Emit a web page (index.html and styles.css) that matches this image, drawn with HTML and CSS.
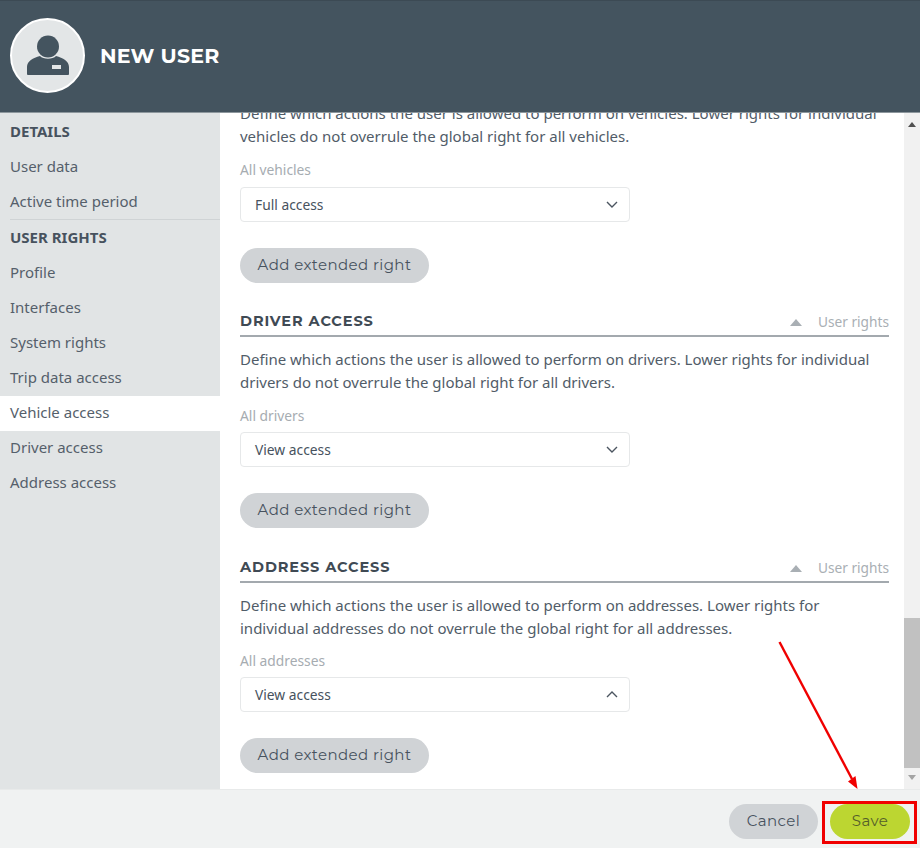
FILE: index.html
```html
<!DOCTYPE html>
<html lang="en">
<head>
<meta charset="utf-8">
<title>New user</title>
<link rel="stylesheet" href="styles.css">
</head>
<body>
<div class="app">
  <header class="header">
    <div class="avatar">
      <svg viewBox="0 0 71 71" width="71" height="71" aria-hidden="true">
        <circle cx="36" cy="26.500" r="11" fill="#44545f"/>
        <path d="M15 54V47C15 41 21 38 28 36C31 39.500 41 39.500 44 36C51 38 57 41 57 47V54C57 55 56 55 55 55H17C16 55 15 55 15 54Z" fill="#44545f"/>
        <rect x="40" y="45" width="9" height="4" fill="#e3e6e7"/>
      </svg>
    </div>
    <h1 class="title">NEW USER</h1>
  </header>
  <div class="middle">
    <nav class="sidebar">
      <div class="nav-head">DETAILS</div>
      <a class="nav-item">User data</a>
      <a class="nav-item">Active time period</a>
      <div class="nav-divider"></div>
      <div class="nav-head">USER RIGHTS</div>
      <a class="nav-item">Profile</a>
      <a class="nav-item">Interfaces</a>
      <a class="nav-item">System rights</a>
      <a class="nav-item">Trip data access</a>
      <a class="nav-item active">Vehicle access</a>
      <a class="nav-item">Driver access</a>
      <a class="nav-item">Address access</a>
    </nav>
    <main class="content">
      <div class="sections">
        <section class="section sec-vehicle">
          <p class="desc">Define which actions the user is allowed to perform on vehicles. Lower rights for individual vehicles do not overrule the global right for all vehicles.</p>
          <div class="field-label">All vehicles</div>
          <div class="select"><span>Full access</span>
            <svg class="chev" viewBox="0 0 12 7" width="12" height="7"><path d="M1 1L6 6L11 1" fill="none" stroke="#4b5560" stroke-width="1.400"/></svg>
          </div>
          <button class="btn btn-grey wide">Add extended right</button>
        </section>
        <section class="section sec-driver">
          <div class="section-head">
            <h2>DRIVER ACCESS</h2>
            <span class="crumb"><i class="tri"></i>User rights</span>
          </div>
          <p class="desc">Define which actions the user is allowed to perform on drivers. Lower rights for individual drivers do not overrule the global right for all drivers.</p>
          <div class="field-label">All drivers</div>
          <div class="select"><span>View access</span>
            <svg class="chev" viewBox="0 0 12 7" width="12" height="7"><path d="M1 1L6 6L11 1" fill="none" stroke="#4b5560" stroke-width="1.400"/></svg>
          </div>
          <button class="btn btn-grey wide">Add extended right</button>
        </section>
        <section class="section">
          <div class="section-head">
            <h2>ADDRESS ACCESS</h2>
            <span class="crumb"><i class="tri"></i>User rights</span>
          </div>
          <p class="desc">Define which actions the user is allowed to perform on addresses. Lower rights for individual addresses do not overrule the global right for all addresses.</p>
          <div class="field-label">All addresses</div>
          <div class="select"><span>View access</span>
            <svg class="chev" viewBox="0 0 12 7" width="12" height="7"><path d="M1 6L6 1L11 6" fill="none" stroke="#4b5560" stroke-width="1.400"/></svg>
          </div>
          <button class="btn btn-grey wide">Add extended right</button>
        </section>
      </div>
      <div class="scrollbar">
        <i class="sb-up"></i>
        <div class="sb-thumb"></div>
        <i class="sb-down"></i>
      </div>
    </main>
  </div>
  <footer class="footer">
    <button class="btn btn-grey cancel">Cancel</button>
    <button class="btn btn-save">Save</button>
  </footer>
  <div class="mark-box"></div>
  <svg class="mark-arrow" viewBox="0 0 920 848" width="920" height="848" aria-hidden="true">
    <line x1="779.500" y1="642" x2="852" y2="779" stroke="#f00000" stroke-width="2.400"/>
    <polygon points="857.500,789 848,781.500 855.500,776" fill="#f00000"/>
  </svg>
</div>
</body>
</html>
```
FILE: styles.css
```css
* { box-sizing: border-box; }
html, body { margin: 0; height: 100%; }
body { font-family: "Noto Sans", "Open Sans", sans-serif; color: #47525e; background: #fff; overflow: hidden; }
.app { position: relative; width: 920px; height: 848px; display: flex; flex-direction: column; }

.header { height: 113px; flex: none; display: flex; align-items: center; gap: 15px; padding: 0 0 3px 10px; background: #44545f; border-top: 1px solid #3c4a54; border-bottom: 1px solid #8d979d; position: relative; z-index: 1; }
.avatar { width: 75px; height: 75px; border-radius: 50%; background: #e3e6e7; border: 2px solid #fff; display: flex; align-items: center; justify-content: center; }
.title { margin: 0; font-family: "Montserrat", "Inter", sans-serif; font-size: 20.500px; font-weight: 700; color: #fff; letter-spacing: 0.200px; }

.middle { flex: 1; display: flex; min-height: 0; }
.sidebar { width: 220px; flex: none; background: #e1e4e5; padding-top: 2px; }
.nav-head { height: 35px; display: flex; align-items: center; padding: 0 0 3px 10px; font-size: 15px; font-weight: 700; color: #47525e; }
.nav-item { height: 35px; display: flex; align-items: center; padding: 0 0 3px 10px; font-size: 15px; color: #555f6b; }
.nav-item.active { background: #fff; }
.nav-divider { height: 1px; margin: -1px 0 1px 10px; background: #cfd3d5; }

.content { flex: 1; display: flex; min-width: 0; background: #fff; overflow: hidden; }
.sections { flex: 1; display: flex; flex-direction: column; justify-content: flex-end; padding: 0 15px 16px 20px; overflow: hidden; min-width: 0; }
.section { flex: none; }
.section + .section { margin-top: 28px; }
.section.sec-driver { margin-top: 27px; }
.section-head { display: flex; align-items: flex-end; justify-content: space-between; height: 27px; padding-bottom: 5px; border-bottom: 2px solid #a3a9ae; }
.section-head h2 { margin: 0; font-family: "Montserrat", "Inter", sans-serif; font-size: 14.500px; font-weight: 700; color: #3f4a54; letter-spacing: 0.900px; line-height: 18px; }
.crumb { display: flex; align-items: center; margin-bottom: -1px; font-size: 13.700px; color: #a9afb4; line-height: 18px; }
.tri { width: 0; height: 0; margin-right: 16px; border-left: 6.500px solid transparent; border-right: 6.500px solid transparent; border-bottom: 7px solid #a9afb4; }
.desc { margin: 11px 0 0; font-size: 15px; line-height: 23px; color: #515c68; }
.field-label { margin-top: 11px; font-size: 13.800px; line-height: 20px; color: #a6acb1; }
.sec-vehicle .field-label, .sec-driver .field-label { margin-top: 12px; }
.select { margin-top: 6px; width: 390px; height: 35px; display: flex; align-items: center; justify-content: space-between; padding: 0 11px 1px 14px; background: #fff; border: 1px solid #e6e8e9; border-radius: 4px; font-size: 13.800px; color: #47525e; }
.sec-vehicle .select { margin-top: 7px; }
.btn { border: 0; height: 35px; padding: 0 0 2px; border-radius: 18px; display: block; font-family: "Montserrat", "Inter", sans-serif; font-size: 15px; letter-spacing: 0.400px; color: #47525e; }
.btn-grey { background: #d0d3d6; }
.wide { margin-top: 26px; width: 189px; }

.scrollbar { width: 16px; flex: none; background: #f1f1f1; display: flex; flex-direction: column; align-items: center; }
.sb-up { margin: 9px 0 auto; width: 0; height: 0; border-left: 4px solid transparent; border-right: 4px solid transparent; border-bottom: 5px solid #505050; }
.sb-thumb { width: 16px; height: 150px; background: #c1c1c1; }
.sb-down { margin: 7px 0 9px; width: 0; height: 0; border-left: 4px solid transparent; border-right: 4px solid transparent; border-top: 5px solid #a3a3a3; }

.footer { height: 59px; flex: none; display: flex; align-items: center; justify-content: flex-end; gap: 12px; padding: 4px 10px 0 0; background: #f0f2f2; border-top: 1px solid #e8eaea; }
.cancel { width: 89px; }
.btn-save { width: 80px; background: #bcd631; color: #555e2a; }

.mark-box { position: absolute; left: 822px; top: 801px; width: 95px; height: 43px; border: 3px solid #f00000; }
.mark-arrow { position: absolute; left: 0; top: 0; pointer-events: none; }
```
